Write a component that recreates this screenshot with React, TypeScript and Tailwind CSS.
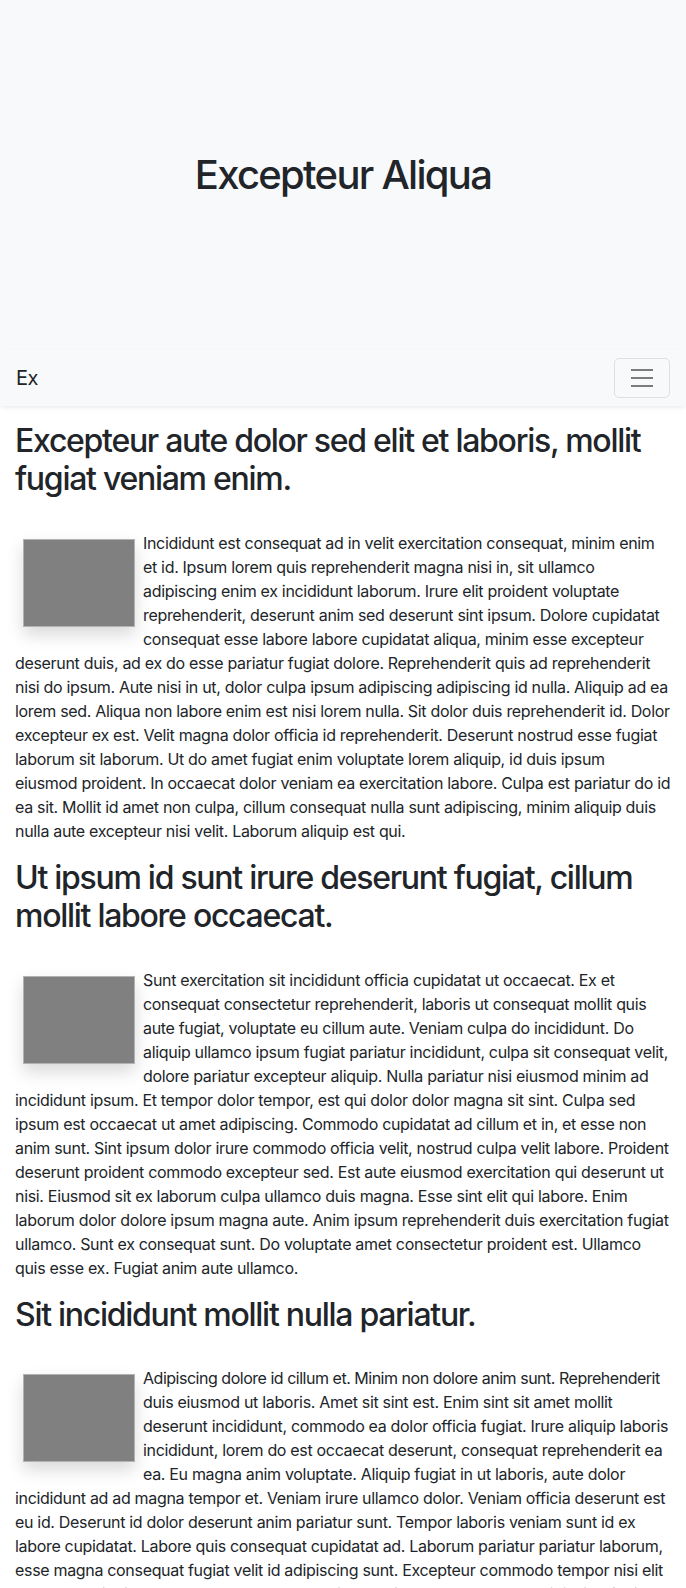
const sections = [
  {
    title: "Excepteur aute dolor sed elit et laboris, mollit fugiat veniam enim.",
    lead: "",
    body: "Incididunt est consequat ad in velit exercitation consequat, minim enim et id. Ipsum lorem quis reprehenderit magna nisi in, sit ullamco adipiscing enim ex incididunt laborum. Irure elit proident voluptate reprehenderit, deserunt anim sed deserunt sint ipsum. Dolore cupidatat consequat esse labore labore cupidatat aliqua, minim esse excepteur deserunt duis, ad ex do esse pariatur fugiat dolore. Reprehenderit quis ad reprehenderit nisi do ipsum. Aute nisi in ut, dolor culpa ipsum adipiscing adipiscing id nulla. Aliquip ad ea lorem sed. Aliqua non labore enim est nisi lorem nulla. Sit dolor duis reprehenderit id. Dolor excepteur ex est. Velit magna dolor officia id reprehenderit. Deserunt nostrud esse fugiat laborum sit laborum. Ut do amet fugiat enim voluptate lorem aliquip, id duis ipsum eiusmod proident. In occaecat dolor veniam ea exercitation labore. Culpa est pariatur do id ea sit. Mollit id amet non culpa, cillum consequat nulla sunt adipiscing, minim aliquip duis nulla aute excepteur nisi velit. Laborum aliquip est qui.",
  },
  {
    title: "Ut ipsum id sunt irure deserunt fugiat, cillum mollit labore occaecat.",
    lead: "",
    body: "Sunt exercitation sit incididunt officia cupidatat ut occaecat. Ex et consequat consectetur reprehenderit, laboris ut consequat mollit quis aute fugiat, voluptate eu cillum aute. Veniam culpa do incididunt. Do aliquip ullamco ipsum fugiat pariatur incididunt, culpa sit consequat velit, dolore pariatur excepteur aliquip. Nulla pariatur nisi eiusmod minim ad incididunt ipsum. Et tempor dolor tempor, est qui dolor dolor magna sit sint. Culpa sed ipsum est occaecat ut amet adipiscing. Commodo cupidatat ad cillum et in, et esse non anim sunt. Sint ipsum dolor irure commodo officia velit, nostrud culpa velit labore. Proident deserunt proident commodo excepteur sed. Est aute eiusmod exercitation qui deserunt ut nisi. Eiusmod sit ex laborum culpa ullamco duis magna. Esse sint elit qui labore. Enim laborum dolor dolore ipsum magna aute. Anim ipsum reprehenderit duis exercitation fugiat ullamco. Sunt ex consequat sunt. Do voluptate amet consectetur proident est. Ullamco quis esse ex. Fugiat anim aute ullamco.",
  },
  {
    title: "Sit incididunt mollit nulla pariatur.",
    lead: "Adipiscing dolore id cillum et. Minim non dolore anim sunt. Reprehenderit",
    body: " duis eiusmod ut laboris. Amet sit sint est. Enim sint sit amet mollit deserunt incididunt, commodo ea dolor officia fugiat. Irure aliquip laboris incididunt, lorem do est occaecat deserunt, consequat reprehenderit ea ea. Eu magna anim voluptate. Aliquip fugiat in ut laboris, aute dolor incididunt ad ad magna tempor et. Veniam irure ullamco dolor. Veniam officia deserunt est eu id. Deserunt id dolor deserunt anim pariatur sunt. Tempor laboris veniam sunt id ex labore cupidatat. Labore quis consequat cupidatat ad. Laborum pariatur pariatur laborum, esse magna consequat fugiat velit id adipiscing sunt. Excepteur commodo tempor nisi elit et dolore. Aliquip dolor lorem laborum, ut do ipsum cillum nostrud sunt, adipiscing fugiat ullamco. Dolor sit amet.",
  },
];

function Navbar() {
  return (
    <nav className="flex h-14 items-center justify-between rounded-b-sm bg-[#f8f9fa] px-4 py-2 shadow-[0_0.125rem_0.25rem_rgba(0,0,0,0.075)]">
      <a className="text-[20px] leading-[30px] tracking-[-0.02em] text-[#212529]">Ex</a>
      <button
        type="button"
        className="flex h-10 w-14 items-center justify-center rounded-[5px] border border-[rgba(0,0,0,0.1)]"
      >
        <svg width="30" height="30" viewBox="0 0 30 30">
          <path
            stroke="rgba(0,0,0,0.5)"
            strokeWidth="2"
            strokeMiterlimit="10"
            d="M4 7h22M4 15h22M4 23h22"
          />
        </svg>
      </button>
    </nav>
  );
}

export default function App() {
  return (
    <div className="min-h-screen bg-white font-['Inter','Liberation_Sans',sans-serif] text-[#212529]">
      {/* Hero */}
      <header className="flex h-[350px] items-center justify-center bg-[#f8f9fa]">
        <h1 className="text-[40px] font-medium leading-[1.2] tracking-[-0.043em]">Excepteur Aliqua</h1>
      </header>

      <Navbar />

      <main className="px-[15px] pt-4">
        {sections.map((s, i) => (
          <section key={i}>
            <h2 className="mb-8 text-[32px] font-medium leading-[1.2] tracking-[-0.04em]">{s.title}</h2>
            <p className="mb-4 text-[16px] leading-6 tracking-[-0.02em]">
              <span className="float-left m-2 block h-[88px] w-[112px] border border-[#b3b3b3] bg-[#808080] shadow-[0_0.5rem_1rem_rgba(0,0,0,0.15)]" />
              {s.lead && <span className="tracking-[-0.03em]">{s.lead}</span>}
              {s.body}
            </p>
          </section>
        ))}
      </main>
    </div>
  );
}
